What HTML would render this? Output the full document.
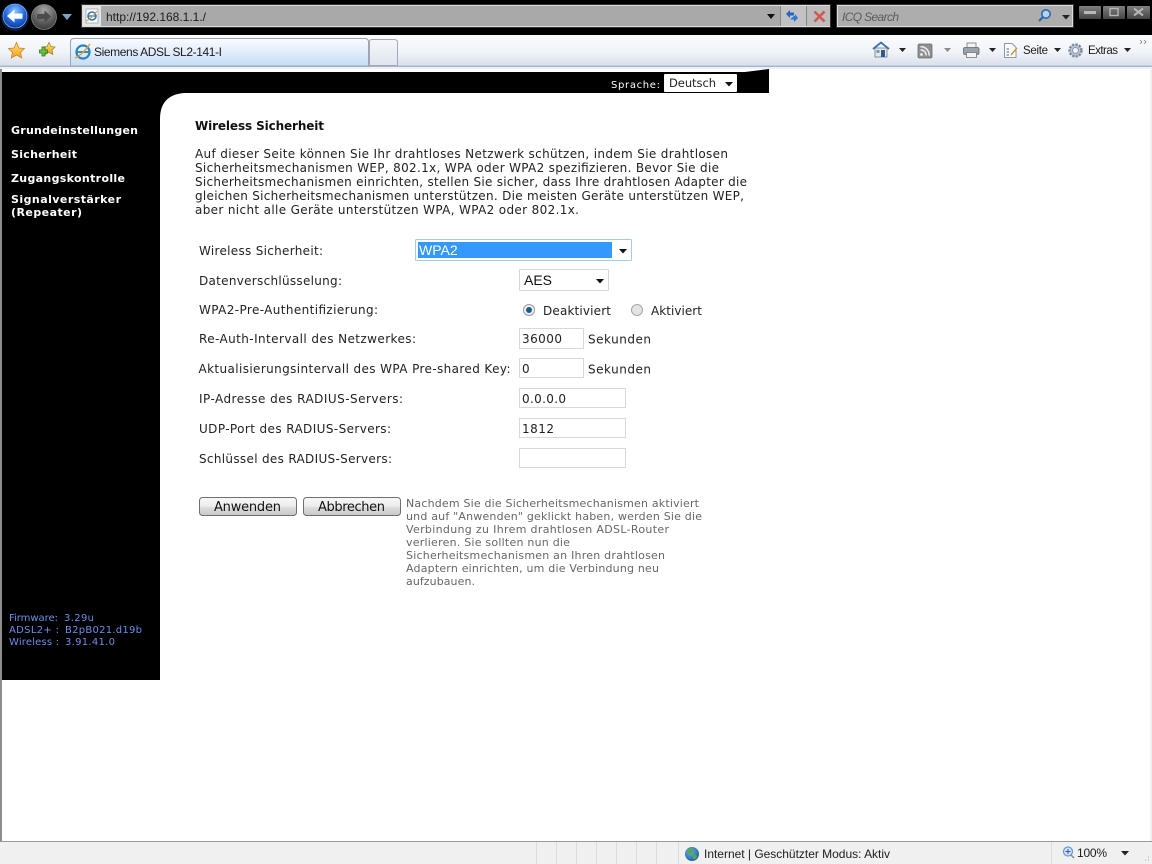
<!DOCTYPE html>
<html lang="de"><head><meta charset="utf-8"><title>Siemens ADSL SL2-141-I</title>
<style>
html,body{margin:0;padding:0;background:#fff;overflow:hidden}
svg{position:absolute;left:0;top:0;display:block}
.v{font-family:"DejaVu Sans",sans-serif;font-size:12px;fill:#222}
.b{font-family:"DejaVu Sans",sans-serif;font-size:11px;font-weight:bold;fill:#fff}
.p{font-family:"DejaVu Sans",sans-serif;font-size:12px;fill:#222}
.g{font-family:"DejaVu Sans",sans-serif;font-size:11px;fill:#666}
.f{font-family:"DejaVu Sans",sans-serif;font-size:10px;fill:#6c8fe8}
.c{font-family:"Liberation Sans",sans-serif;font-size:12px;fill:#1c1c1c}
.ctl{font-family:"Liberation Sans",sans-serif;font-size:14px;fill:#111}
</style></head><body>
<svg width="1152" height="864" viewBox="0 0 1152 864" xmlns="http://www.w3.org/2000/svg">
<defs>
<linearGradient id="cmd" x1="0" y1="0" x2="0" y2="1"><stop offset="0" stop-color="#fbfcfe"/><stop offset=".55" stop-color="#f0f3f8"/><stop offset="1" stop-color="#d6deea"/></linearGradient>
<linearGradient id="tab" x1="0" y1="0" x2="0" y2="1"><stop offset="0" stop-color="#fbfcfe"/><stop offset=".45" stop-color="#e4eefa"/><stop offset="1" stop-color="#c4dcf6"/></linearGradient>
<linearGradient id="tab2" x1="0" y1="0" x2="0" y2="1"><stop offset="0" stop-color="#f6f7fa"/><stop offset="1" stop-color="#dfe5ee"/></linearGradient>
<linearGradient id="btn" x1="0" y1="0" x2="0" y2="1"><stop offset="0" stop-color="#f8f8f8"/><stop offset=".5" stop-color="#ececec"/><stop offset=".55" stop-color="#dcdcdc"/><stop offset="1" stop-color="#c8c8c8"/></linearGradient>
<radialGradient id="back" cx=".5" cy=".3" r=".75"><stop offset="0" stop-color="#8cc4ff"/><stop offset=".55" stop-color="#1f68e0"/><stop offset="1" stop-color="#0c3590"/></radialGradient>
<radialGradient id="fwd" cx=".5" cy=".25" r=".8"><stop offset="0" stop-color="#a8a8a8"/><stop offset=".6" stop-color="#5c5c5c"/><stop offset="1" stop-color="#333"/></radialGradient>
<radialGradient id="globe" cx=".4" cy=".35" r=".7"><stop offset="0" stop-color="#6ab4e8"/><stop offset="1" stop-color="#1a5c9c"/></radialGradient>
<linearGradient id="star" x1="0" y1="0" x2="0" y2="1"><stop offset="0" stop-color="#ffe27a"/><stop offset="1" stop-color="#f0a020"/></linearGradient>
<linearGradient id="dark" x1="0" y1="0" x2="0" y2="1"><stop offset="0" stop-color="#808080"/><stop offset="1" stop-color="#444"/></linearGradient>
</defs>

<!-- Window top -->
<rect width="1152" height="36" fill="#000"/>
<circle cx="15" cy="17" r="14" fill="#0b1c44"/>
<circle cx="15" cy="16" r="12" fill="url(#back)" stroke="#a8c4f0" stroke-width=".6"/>
<path d="M7 16 L14.5 9.5 V13.5 H22.5 V18.8 H14.5 V22.5 Z" fill="#fff"/>
<circle cx="44" cy="17" r="12.500" fill="url(#fwd)" stroke="#808080" stroke-width=".8"/>
<path d="M51 16.500 L44.500 10.500 V14 H37 V19 H44.500 V22.500 Z" fill="#4c4c4c"/>
<path d="M62 14 H72 L67 20 Z" fill="#7da4c4"/>

<!-- Address bar -->
<rect x="81.500" y="4.500" width="749" height="23" fill="#555" stroke="#333"/>
<rect x="82.500" y="5.500" width="747" height="21" fill="#a9a9a9" stroke="#dedede"/>
<rect x="83" y="6" width="18" height="20" fill="#e4e4e4"/>
<rect x="86" y="9" width="12" height="14" fill="#fff" stroke="#999" stroke-width=".7"/>
<ellipse cx="92" cy="16" rx="4" ry="4" fill="none" stroke="#2a76b8" stroke-width="1.600"/>
<path d="M88.500 16 H95.500" stroke="#2a76b8" stroke-width="1.300"/>
<path d="M86.500 21 Q91 19 97 11" fill="none" stroke="#d8a030" stroke-width="1.100"/>
<text class="c" x="106" y="21" textLength="100" lengthAdjust="spacing">http://192.168.1.1./</text>
<path d="M767 14 H775 L771 19 Z" fill="#111"/>
<rect x="780" y="6" width="1" height="20" fill="#888"/>
<rect x="781" y="6" width="25" height="20" fill="#c2c2c2"/>
<rect x="806" y="6" width="1" height="20" fill="#888"/>
<rect x="807" y="6" width="23" height="20" fill="#bdbdbd"/>
<path d="M786 14 L790 10 V12.500 H794 V15.500 H790 V18 Z" fill="#2c62c0"/>
<path d="M798 18 L794 22 V19.500 H790 L794 16 H795 V14 Z" fill="#2c78d8"/>
<path d="M814.500 11.500 L824.500 21.500 M824.500 11.500 L814.500 21.500" stroke="#d0584e" stroke-width="2.600"/>

<!-- Search -->
<rect x="836.500" y="4.500" width="237" height="23" fill="#555" stroke="#333"/>
<rect x="837.500" y="5.500" width="235" height="21" fill="#adadad" stroke="#dcdcdc"/>
<text x="842" y="21" font-family="Liberation Sans,sans-serif" font-size="12" font-style="italic" fill="#5c5c5c" textLength="57" lengthAdjust="spacing">ICQ Search</text>
<circle cx="1046" cy="14" r="4.200" fill="#b8d4ec" stroke="#2a6ab0" stroke-width="1.600"/>
<path d="M1043 17 L1039 21" stroke="#2a6ab0" stroke-width="2.200"/>
<path d="M1062 15 H1070 L1066 19.500 Z" fill="#222"/>

<!-- Window buttons -->
<rect x="1079" y="6" width="22" height="13" rx="1" fill="url(#dark)"/>
<rect x="1084" y="11" width="12" height="3" fill="#b8b8b8"/>
<rect x="1103" y="6" width="22" height="13" rx="1" fill="url(#dark)"/>
<rect x="1110" y="8.500" width="8" height="7" fill="none" stroke="#b8b8b8" stroke-width="1.400"/>
<rect x="1127" y="6" width="23" height="13" rx="1" fill="url(#dark)"/>
<path d="M1134 8.500 L1143 15.500 M1143 8.500 L1134 15.500" stroke="#b8b8b8" stroke-width="2"/>

<!-- Command / tab bar -->
<rect y="35" width="1152" height="32" fill="url(#cmd)"/>
<rect y="65" width="1152" height="1" fill="#c4cede"/>
<rect y="66" width="1152" height="1" fill="#a8b4cc"/>
<rect y="67" width="1152" height="2" fill="#eef1f6"/>
<path d="M16.500 42.500 L19 48 L24.500 48.500 L20.500 52.500 L21.700 58 L16.500 55 L11.300 58 L12.500 52.500 L8.500 48.500 L14 48 Z" fill="url(#star)" stroke="#c8842c" stroke-width=".8"/>
<path d="M49 42.500 L51 46.500 L55 47 L52 50 L52.800 54.500 L49 52.300 L45.200 54.500 L46 50 L43 47 L47 46.500 Z" fill="url(#star)" stroke="#a0842c" stroke-width=".8"/>
<path d="M42 47 V50 H39.500 V53 H42 V56 H45 V53 H47.500 V50 H45 V47 Z" fill="#6cc040" stroke="#2c7a18" stroke-width=".8"/>

<path d="M70.500 66 V42 Q70.500 38.500 74 38.500 H365 Q368.500 38.500 368.500 42 V66 Z" fill="url(#tab)" stroke="#9aa4b4"/>
<circle cx="83" cy="52" r="6.500" fill="none" stroke="#2a82c4" stroke-width="2.200"/>
<path d="M77.500 52 H88.500" stroke="#2a82c4" stroke-width="1.800"/>
<path d="M75 58 Q82 55 90 44" fill="none" stroke="#d8a030" stroke-width="1.400"/>
<text class="c" x="94" y="56" textLength="128" lengthAdjust="spacing">Siemens ADSL SL2-141-I</text>
<path d="M369.500 65.500 V42 Q369.500 39.500 372 39.500 H394 Q397.500 39.500 397.500 42 V65.500 Z" fill="url(#tab2)" stroke="#a2a8b4"/>

<!-- Right command icons -->
<path d="M873 49 L881 42.500 L889 49" fill="none" stroke="#3a70a8" stroke-width="1.800"/>
<rect x="875" y="48" width="12" height="9" fill="#f0e8d8" stroke="#6a7a90" stroke-width=".8"/>
<rect x="881" y="50" width="4" height="7" fill="#2a5c9c"/>
<rect x="876.500" y="50" width="3" height="3" fill="#5a9cd8"/>
<path d="M899 48 H906 L902.500 52 Z" fill="#222"/>
<rect x="918" y="44" width="14" height="14" rx="1.500" fill="#8f8f8f" stroke="#6c6c6c" stroke-width=".8"/>
<circle cx="921.500" cy="54.500" r="1.400" fill="#eee"/>
<path d="M920.500 50 A5 5 0 0 1 926 55.500 M920.500 46.800 A8 8 0 0 1 929 55.500" fill="none" stroke="#eee" stroke-width="1.500"/>
<path d="M944 48 H951 L947.500 52 Z" fill="#8a8a8a"/>
<rect x="967" y="43" width="9" height="5" fill="#f4f4f4" stroke="#777" stroke-width=".8"/>
<rect x="963.500" y="47.500" width="15.500" height="7" rx="1.500" fill="#9aa2ac" stroke="#666" stroke-width=".8"/>
<rect x="966.500" y="52.500" width="10" height="5" fill="#f4f4f4" stroke="#777" stroke-width=".8"/>
<path d="M989 48 H996 L992.500 52 Z" fill="#222"/>
<path d="M1004.500 43.500 H1012 L1016 47.500 V57.500 H1004.500 Z" fill="#fbfbfb" stroke="#8a98a8"/>
<path d="M1006.500 49 H1009 M1006.500 52 H1009 M1006.500 55 H1009" stroke="#4a6a9a"/>
<path d="M1011 55 L1017 48" stroke="#c89830" stroke-width="1.400"/>
<text class="c" x="1023" y="54" textLength="25" lengthAdjust="spacing" style="font-size:11.500px">Seite</text>
<path d="M1054 48 H1061 L1057.500 52 Z" fill="#222"/>
<circle cx="1075.500" cy="50.500" r="6" fill="#bfc8d4" stroke="#7c8ca0" stroke-width="2.400" stroke-dasharray="2.300 1.200"/>
<circle cx="1075.500" cy="50.500" r="3" fill="#f0f4f8" stroke="#8898ac"/>
<text class="c" x="1088" y="54" textLength="30" lengthAdjust="spacing" style="font-size:11.500px">Extras</text>
<path d="M1124 48 H1131 L1127.500 52 Z" fill="#222"/>
<path d="M1140 40 L1142 42 L1140 44 M1144 40 L1146 42 L1144 44" fill="none" stroke="#7a8494" stroke-width=".8"/>

<!-- Window edges -->
<rect x="0" y="69" width="2" height="772" fill="#8c8c8c"/>
<rect x="1150" y="69" width="2" height="772" fill="#f0f0f0"/>

<!-- Page: header & sidebar -->
<path d="M2 72 H745 L769 69 V93 H2 Z" fill="#000"/>
<rect x="2" y="72" width="158" height="608" fill="#000"/>
<path d="M160 93 H184 Q160 95 160 119 Z" fill="#000"/>
<text x="611" y="88" font-family="DejaVu Sans,sans-serif" font-size="10" fill="#fff" textLength="49" lengthAdjust="spacing">Sprache:</text>
<rect x="664" y="74" width="73" height="18" rx="1" fill="#fff"/>
<text x="669" y="87" font-family="DejaVu Sans,sans-serif" font-size="11.500" fill="#222" textLength="47" lengthAdjust="spacing">Deutsch</text>
<path d="M725 82 H733 L729 86.500 Z" fill="#111"/>

<text class="b" x="11" y="134" textLength="127" lengthAdjust="spacing">Grundeinstellungen</text>
<text class="b" x="11" y="158" textLength="66" lengthAdjust="spacing">Sicherheit</text>
<text class="b" x="11" y="182" textLength="114" lengthAdjust="spacing">Zugangskontrolle</text>
<text class="b" x="11" y="203" textLength="110" lengthAdjust="spacing">Signalverstärker</text>
<text class="b" x="11" y="216" textLength="71" lengthAdjust="spacing">(Repeater)</text>

<text class="f" x="9" y="621" textLength="49" lengthAdjust="spacing">Firmware:</text>
<text class="f" x="64" y="621" textLength="30" lengthAdjust="spacing">3.29u</text>
<text class="f" x="9" y="633" textLength="50" lengthAdjust="spacing">ADSL2+ :</text>
<text class="f" x="65" y="633" textLength="77" lengthAdjust="spacing">B2pB021.d19b</text>
<text class="f" x="9" y="645" textLength="50" lengthAdjust="spacing">Wireless :</text>
<text class="f" x="65" y="645" textLength="50" lengthAdjust="spacing">3.91.41.0</text>

<!-- Main text -->
<text x="195" y="130" font-family="DejaVu Sans,sans-serif" font-size="12" font-weight="bold" fill="#111" textLength="129" lengthAdjust="spacing">Wireless Sicherheit</text>
<text class="p" x="195" y="158" textLength="533" lengthAdjust="spacing">Auf dieser Seite können Sie Ihr drahtloses Netzwerk schützen, indem Sie drahtlosen</text>
<text class="p" x="195" y="172" textLength="524" lengthAdjust="spacing">Sicherheitsmechanismen WEP, 802.1x, WPA oder WPA2 spezifizieren. Bevor Sie die</text>
<text class="p" x="195" y="186" textLength="552" lengthAdjust="spacing">Sicherheitsmechanismen einrichten, stellen Sie sicher, dass Ihre drahtlosen Adapter die</text>
<text class="p" x="195" y="200" textLength="549" lengthAdjust="spacing">gleichen Sicherheitsmechanismen unterstützen. Die meisten Geräte unterstützen WEP,</text>
<text class="p" x="195" y="214" textLength="384" lengthAdjust="spacing">aber nicht alle Geräte unterstützen WPA, WPA2 oder 802.1x.</text>

<!-- Labels -->
<text class="v" x="199" y="255" textLength="124" lengthAdjust="spacing">Wireless Sicherheit:</text>
<text class="v" x="199" y="285" textLength="143" lengthAdjust="spacing">Datenverschlüsselung:</text>
<text class="v" x="199" y="314" textLength="179" lengthAdjust="spacing">WPA2-Pre-Authentifizierung:</text>
<text class="v" x="199" y="343" textLength="217" lengthAdjust="spacing">Re-Auth-Intervall des Netzwerkes:</text>
<text class="v" x="198.500" y="373" textLength="312" lengthAdjust="spacing">Aktualisierungsintervall des WPA Pre-shared Key:</text>
<text class="v" x="199" y="403" textLength="204" lengthAdjust="spacing">IP-Adresse des RADIUS-Servers:</text>
<text class="v" x="199" y="433" textLength="192" lengthAdjust="spacing">UDP-Port des RADIUS-Servers:</text>
<text class="v" x="199" y="463" textLength="193" lengthAdjust="spacing">Schlüssel des RADIUS-Servers:</text>

<!-- Controls -->
<rect x="415.500" y="239.500" width="216" height="21" rx="1" fill="#fff" stroke="#a8c8e4"/>
<rect x="418" y="242" width="194" height="16" fill="#3399ff"/>
<text x="419" y="255" font-family="Liberation Sans,sans-serif" font-size="14" fill="#fff">WPA2</text>
<path d="M619 249 H627 L623 253.500 Z" fill="#111"/>

<rect x="519.500" y="269.500" width="89" height="21" rx="1" fill="#fff" stroke="#d6d6d6"/>
<text class="ctl" x="524" y="285">AES</text>
<path d="M596 279 H604 L600 283.500 Z" fill="#111"/>

<circle cx="529" cy="310" r="5.500" fill="#eef0f2" stroke="#9a9a9a"/>
<circle cx="529" cy="310" r="3" fill="#1c5c88"/>
<text class="v" x="543" y="315" textLength="68" lengthAdjust="spacing">Deaktiviert</text>
<circle cx="637" cy="310" r="5.500" fill="#e4e4e4" stroke="#a4a4a4"/>
<text class="v" x="651" y="315" textLength="51" lengthAdjust="spacing">Aktiviert</text>

<rect x="519.500" y="328.500" width="64" height="20" fill="#fff" stroke="#d8d8d8"/>
<text class="v" x="522" y="343" textLength="40" lengthAdjust="spacing">36000</text>
<text class="v" x="588" y="343.500" textLength="63" lengthAdjust="spacing">Sekunden</text>
<rect x="519.500" y="358.500" width="64" height="19" fill="#fff" stroke="#d8d8d8"/>
<text class="v" x="522" y="373">0</text>
<text class="v" x="588" y="373.500" textLength="63" lengthAdjust="spacing">Sekunden</text>
<rect x="519.500" y="388.500" width="106" height="19" fill="#fff" stroke="#d8d8d8"/>
<text class="v" x="522" y="403" textLength="44" lengthAdjust="spacing">0.0.0.0</text>
<rect x="519.500" y="418.500" width="106" height="19" fill="#fff" stroke="#d8d8d8"/>
<text class="v" x="522" y="433" textLength="32" lengthAdjust="spacing">1812</text>
<rect x="519.500" y="448.500" width="106" height="19" fill="#fff" stroke="#d8d8d8"/>

<!-- Buttons -->
<rect x="199.500" y="497.500" width="97" height="18" rx="3" fill="url(#btn)" stroke="#707070"/>
<text class="v" x="214" y="511" textLength="67" lengthAdjust="spacing" style="font-size:13px;fill:#111">Anwenden</text>
<rect x="303.500" y="497.500" width="97" height="18" rx="3" fill="url(#btn)" stroke="#707070"/>
<text class="v" x="318" y="511" textLength="67" lengthAdjust="spacing" style="font-size:13px;fill:#111">Abbrechen</text>

<text class="g" x="406" y="507" textLength="293" lengthAdjust="spacing">Nachdem Sie die Sicherheitsmechanismen aktiviert</text>
<text class="g" x="406" y="520" textLength="296" lengthAdjust="spacing">und auf "Anwenden" geklickt haben, werden Sie die</text>
<text class="g" x="406" y="533" textLength="263" lengthAdjust="spacing">Verbindung zu Ihrem drahtlosen ADSL-Router</text>
<text class="g" x="406" y="546" textLength="164" lengthAdjust="spacing">verlieren. Sie sollten nun die</text>
<text class="g" x="406" y="559" textLength="259" lengthAdjust="spacing">Sicherheitsmechanismen an Ihren drahtlosen</text>
<text class="g" x="406" y="572" textLength="253" lengthAdjust="spacing">Adaptern einrichten, um die Verbindung neu</text>
<text class="g" x="406" y="585" textLength="69" lengthAdjust="spacing">aufzubauen.</text>

<!-- Status bar -->
<rect y="841" width="1152" height="1" fill="#9a9a9a"/>
<rect y="842" width="1152" height="22" fill="#f0f0f0"/>
<g fill="#dcdcdc">
<rect x="536" y="842" width="1" height="22"/><rect x="556" y="842" width="1" height="22"/>
<rect x="576" y="842" width="1" height="22"/><rect x="596" y="842" width="1" height="22"/>
<rect x="616" y="842" width="1" height="22"/><rect x="636" y="842" width="1" height="22"/>
<rect x="656" y="842" width="1" height="22"/><rect x="678" y="842" width="1" height="22"/>
<rect x="1051" y="842" width="1" height="22"/>
</g>
<circle cx="692" cy="854" r="7" fill="url(#globe)"/>
<path d="M688 849 Q692 848 694 851 Q692 854 689 854 Q687 852 688 849 Z M693 855 Q697 854 697 857 Q695 860 693 859 Z" fill="#58a848"/>
<text class="c" x="704" y="858" textLength="186" lengthAdjust="spacing">Internet | Geschützter Modus: Aktiv</text>
<circle cx="1068" cy="851.500" r="4.500" fill="#cfe2f6" stroke="#6a98cc" stroke-width="1.200"/>
<path d="M1065.500 851.500 H1070.500 M1068 849 V854" stroke="#2a5ca8"/>
<path d="M1071 855 L1074 858" stroke="#8a8a8a" stroke-width="1.500"/>
<text class="c" x="1077" y="857" textLength="30" lengthAdjust="spacing">100%</text>
<path d="M1121 851 H1129 L1125 855.500 Z" fill="#222"/>
<path d="M1148 860 h1 M1145 860 h1 M1148 857 h1" stroke="#aaa"/>
</svg>
</body></html>
